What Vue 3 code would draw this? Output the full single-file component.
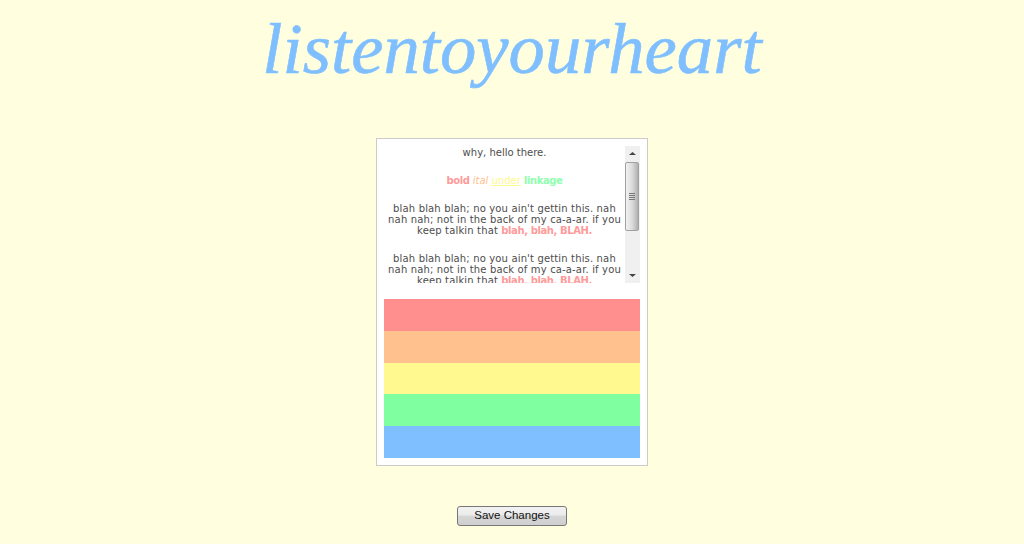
<template>
  <div class="page">
    <h1 class="title">listentoyourheart</h1>

    <div class="card">
      <div class="scroll-box">
        <div class="text">
          <p>why, hello there.</p>
          <p><b class="red">bold</b> <i class="orange">ital</i> <u class="yellow">under</u> <a class="green">linkage</a></p>
          <p v-for="n in 2" :key="n" class="body-text">
            blah blah blah; no you ain't gettin this. nah nah nah; not in the back of my
            ca-a-ar. if you keep talkin that <b class="red">blah, blah, BLAH.</b>
          </p>
        </div>

        <div class="scrollbar">
          <svg class="arrow" width="15" height="15" viewBox="0 0 15 15"><path d="M4 9h7L7.5 6z" fill="#444" /></svg>
          <div class="thumb">
            <span></span><span></span><span></span><span></span>
          </div>
          <svg class="arrow bottom" width="15" height="15" viewBox="0 0 15 15"><path d="M4 6h7L7.5 9z" fill="#444" /></svg>
        </div>
      </div>

      <div class="stripes">
        <div v-for="color in stripes" :key="color" class="stripe" :style="{ background: color }"></div>
      </div>
    </div>

    <button class="save-btn">Save Changes</button>
  </div>
</template>

<script setup>
const stripes = ['#ff8f8f', '#ffc28f', '#fff98f', '#7fff9f', '#7fbfff']
</script>

<style>
html,
body {
  margin: 0;
  background: #ffffdf;
}
</style>

<style scoped>
.page {
  height: 544px;
  overflow: hidden;
  background: #ffffdf;
  display: flex;
  flex-direction: column;
  align-items: center;
}

.title {
  margin: 9px 0 0;
  font-family: "Liberation Serif", serif;
  font-style: italic;
  font-weight: normal;
  font-size: 72.7px;
  line-height: 80px;
  color: #7fbfff;
  -webkit-text-stroke: 0.6px #7fbfff;
}

.card {
  margin-top: 49px;
  box-sizing: border-box;
  width: 272px;
  height: 328px;
  padding: 7px;
  background: #fff;
  border: 1px solid #ccc;
}

.scroll-box {
  display: flex;
  height: 137px;
  overflow: hidden;
}

.text {
  flex: 1;
  padding-top: 1px;
  font-family: "DejaVu Sans", sans-serif;
  font-size: 10px;
  line-height: 11px;
  color: #4d4d4d;
  text-align: center;
  overflow: hidden;
}

.text p {
  margin: 0 0 17px;
}

.text .body-text {
  letter-spacing: 0.15px;
}

.text b,
.text a {
  letter-spacing: -0.4px;
}

.red { color: #ff9a9a; }
.orange { color: #ffc28f; }
.yellow { color: #fff98f; }
.green { color: #8fffaf; font-weight: bold; }

.scrollbar {
  position: relative;
  flex: none;
  width: 15px;
  background: #f0f0f0;
}

.arrow {
  display: block;
}

.arrow.bottom {
  position: absolute;
  bottom: 0;
  left: 0;
}

.thumb {
  box-sizing: border-box;
  margin: 1px 0 0 0;
  height: 69px;
  width: 14px;
  border: 1px solid #a0a0a0;
  border-radius: 2px;
  background: linear-gradient(to right, #f2f2f2, #dcdcdc 50%, #b0b0b0);
  display: flex;
  flex-direction: column;
  align-items: center;
  justify-content: center;
  gap: 1px;
}

.thumb span {
  width: 6px;
  height: 1px;
  background: #777;
}

.stripes {
  margin-top: 16px;
}

.stripe {
  height: 31.8px;
}

.save-btn {
  margin-top: 40px;
  box-sizing: border-box;
  width: 110px;
  height: 20px;
  padding: 0 0 2px;
  border: 1px solid #777;
  border-radius: 3px;
  background: linear-gradient(to bottom, #f2f2f2, #ebebeb 45%, #d6d6d6 50%, #cfcfcf);
  font-family: "Liberation Sans", sans-serif;
  font-size: 11.5px;
  color: #111;
}
</style>
